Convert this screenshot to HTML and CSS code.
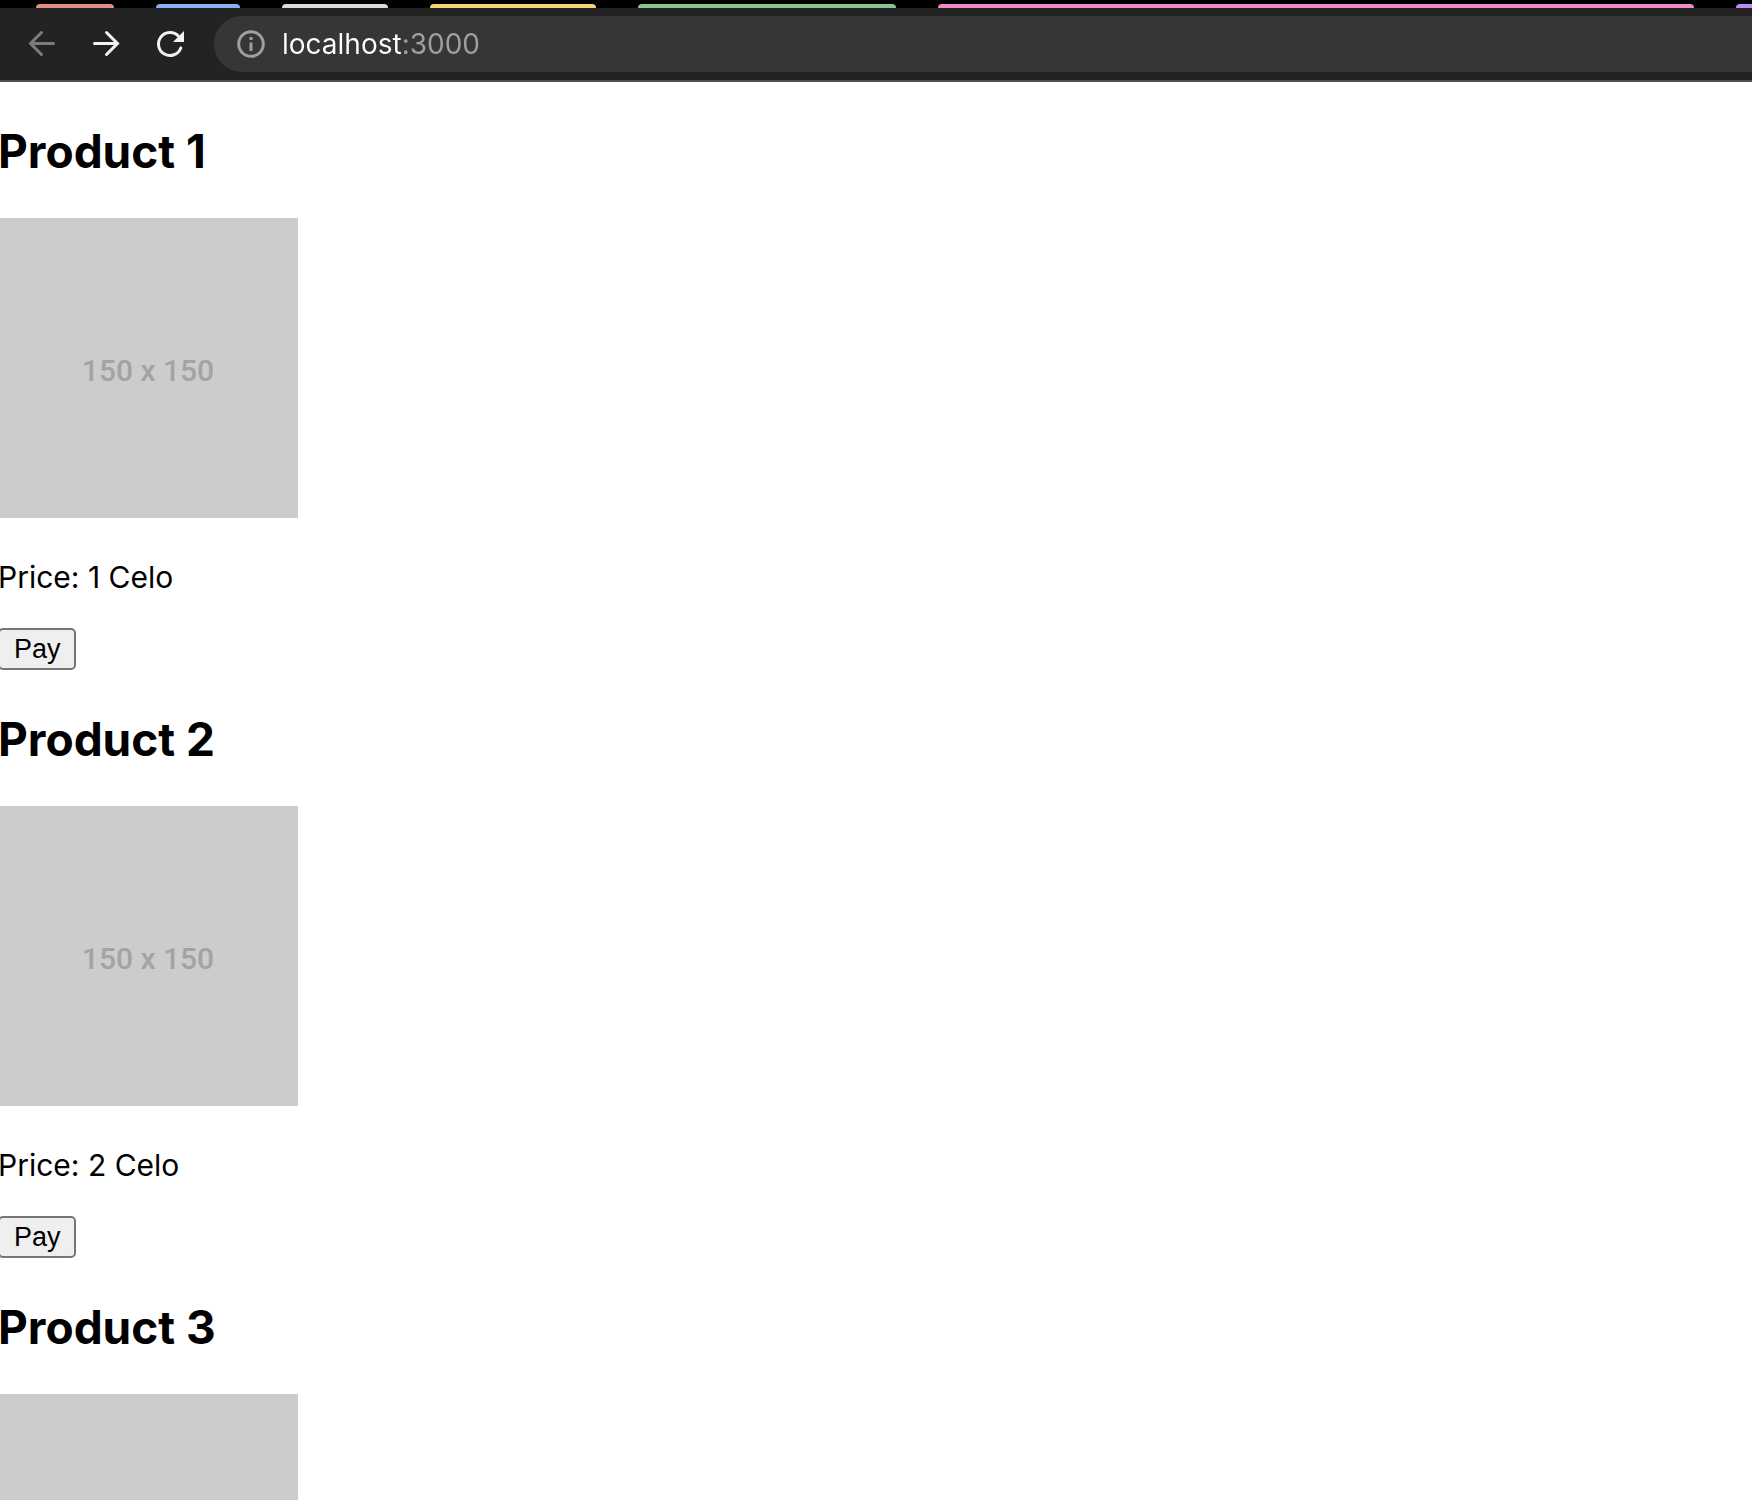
FILE: index.html
```html
<!DOCTYPE html>
<html lang="en">
<head>
<meta charset="utf-8">
<meta name="viewport" content="width=device-width, initial-scale=1">
<title>localhost:3000</title>
<link rel="stylesheet" href="styles.css">
</head>
<body>
<header class="browser">
  <div class="tab-groups" aria-hidden="true">
    <span class="group group-red"></span>
    <span class="group group-blue"></span>
    <span class="group group-grey"></span>
    <span class="group group-yellow"></span>
    <span class="group group-green"></span>
    <span class="group group-pink"></span>
    <span class="group group-purple"></span>
  </div>
  <div class="toolbar">
    <button class="nav-button" type="button" aria-label="Back" disabled>
      <svg viewBox="0 0 32 32" aria-hidden="true"><path d="M27.500 15.500H4.500M15.500 4.500L4.500 15.500L15.500 26.500"/></svg>
    </button>
    <button class="nav-button" type="button" aria-label="Forward">
      <svg viewBox="0 0 32 32" aria-hidden="true"><path d="M4.500 15.500H27.500M16.500 4.500L27.500 15.500L16.500 26.500"/></svg>
    </button>
    <button class="nav-button" type="button" aria-label="Reload">
      <svg viewBox="0 0 32 32" aria-hidden="true"><path d="M24.500 8.200A11.500 11.500 0 1 0 26.800 20"/><path class="solid" d="M30 3V14H19Z"/></svg>
    </button>
    <div class="address-bar">
      <svg class="info-icon" viewBox="0 0 28 28" aria-hidden="true"><circle cx="14" cy="14" r="12.300"/><path d="M14 12.500V21M14 7V10"/></svg>
      <input class="address" type="text" aria-label="Address" value="localhost:3000" spellcheck="false">
    </div>
  </div>
</header>
<main class="products">
  <article class="product">
    <h2 class="product-name">Product 1</h2>
    <div class="product-image">150 x 150</div>
    <p class="product-price">Price: 1 Celo</p>
    <button class="pay-button" type="button">Pay</button>
  </article>
  <article class="product">
    <h2 class="product-name">Product 2</h2>
    <div class="product-image">150 x 150</div>
    <p class="product-price">Price: 2 Celo</p>
    <button class="pay-button" type="button">Pay</button>
  </article>
  <article class="product">
    <h2 class="product-name">Product 3</h2>
    <div class="product-image"></div>
  </article>
</main>
</body>
</html>
```
FILE: styles.css
```css
* {
  box-sizing: border-box;
}

body {
  display: flex;
  flex-direction: column;
  height: 100vh;
  margin: 0;
  background: #fff;
  color: #000;
  font-family: Inter, "Liberation Sans", sans-serif;
}

.browser {
  flex: none;
  border-bottom: 2px solid #524d50;
  background: #232323;
}

.tab-groups {
  display: flex;
  gap: 42px;
  padding: 4px 0 0 36px;
  overflow: hidden;
  background: #000;
}

.group {
  flex: none;
  height: 4px;
  border-radius: 4px 4px 0 0;
}

.group-red { width: 78px; background: #e48d85; }
.group-blue { width: 84px; background: #8ab0f3; }
.group-grey { width: 106px; background: #d9dbe0; }
.group-yellow { width: 166px; background: #f8d472; }
.group-green { width: 258px; background: #8ac395; }
.group-pink { flex: 1; background: #f08bc5; }
.group-purple { width: 16px; border-radius: 4px 0 0 0; background: #bb8cf3; }

.toolbar {
  display: flex;
  align-items: center;
  gap: 32px;
  padding: 8px 0 8px 26px;
}

.nav-button {
  flex: none;
  width: 32px;
  height: 32px;
  padding: 0;
  border: 0;
  background: none;
  color: #f1f3f4;
}

.nav-button:disabled {
  color: #7c7c7c;
}

.nav-button svg {
  display: block;
  fill: none;
  stroke: currentColor;
  stroke-width: 3;
  stroke-linecap: round;
}

.nav-button .solid {
  fill: currentColor;
  stroke: none;
}

.address-bar {
  display: flex;
  flex: 1;
  align-items: center;
  gap: 17px;
  height: 56px;
  margin-left: -4px;
  padding-left: 23px;
  border-radius: 28px 0 0 28px;
  background: #363636;
}

.info-icon {
  flex: none;
  width: 28px;
  fill: none;
  stroke: #9aa0a6;
  stroke-width: 3;
}

.address {
  flex: 1;
  min-width: 0;
  padding: 0;
  border: 0;
  outline: 0;
  background: linear-gradient(90deg, #fff 120px, #a0a0a0 120px);
  background-clip: text;
  color: transparent;
  font: 28px/36px Inter, "Liberation Sans", sans-serif;
}

.products {
  flex: 1;
  min-height: 0;
  margin-left: -2px;
  overflow-y: auto;
  scrollbar-width: none;
}

.product {
  padding-top: 40px;
}

.product-name {
  margin: 0 0 38px;
  font-size: 46px;
  line-height: 58px;
}

.product-image {
  display: flex;
  align-items: center;
  justify-content: center;
  width: 300px;
  height: 300px;
  padding-top: 6px;
  background: #ccc;
  color: #a3a3a3;
  font: 500 30px/36px Roboto, sans-serif;
}

.product-price {
  margin: 40px 0 32px;
  font-size: 30px;
  line-height: 38px;
}

.pay-button {
  display: block;
  height: 42px;
  padding: 0 13px 0 14px;
  border: 2px solid #767676;
  border-radius: 5px;
  background: #efefef;
  color: #000;
  font: 27px/32px "Liberation Sans", sans-serif;
}
```
